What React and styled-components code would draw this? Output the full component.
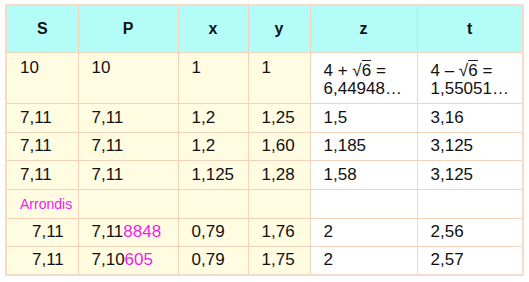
import React from "react";
import styled, { createGlobalStyle } from "styled-components";

const Global = createGlobalStyle`
  html, body { margin: 0; padding: 0; background: #ffffff; }
  body { font-family: "Liberation Sans", Arial, sans-serif; }
`;

const Page = styled.div`
  padding: 4px 0 0 5px;
`;

const Table = styled.table`
  border-collapse: collapse;
  table-layout: fixed;
  width: 519px;
  border: 2px solid #f6dcc8;
  font-family: "Liberation Sans", Arial, sans-serif;
  font-size: 17px;
  color: #111111;
`;

const HeadCell = styled.th`
  background: #b4fcf8;
  border: 1px solid #f2d2b8;
  height: 45px;
  padding: 0;
  font-size: 16px;
  font-weight: bold;
  text-align: center;
  vertical-align: middle;
  color: #111;
`;

const Cell = styled.td`
  background: ${(p) => (p.$white ? "#ffffff" : "#fffce2")};
  border: 1px solid #f2d2b8;
  padding: ${(p) => p.$pt || 0}px 4px 0 ${(p) => p.$pl || 13}px;
  vertical-align: ${(p) => (p.$top ? "top" : "middle")};
  line-height: 18px;
  white-space: nowrap;
`;

const Row = styled.tr`
  height: ${(p) => p.$h}px;
`;

const Pink = styled.span`
  color: #f020ef;
`;

const Note = styled.span`
  display: inline-block;
  color: #f020ef;
  font-size: 14px;
  margin-top: -2px;
`;

const Root = styled.span`
  white-space: nowrap;
`;

const Radicand = styled.span`
  border-top: 1px solid #222;
`;

const Sqrt = ({ n }) => (
  <Root>
    √<Radicand>{n}</Radicand>
  </Root>
);

const rows = [
  { h: 29, s: "7,11", p: "7,11", x: "1,2", y: "1,25", z: "1,5", t: "3,16" },
  { h: 28, s: "7,11", p: "7,11", x: "1,2", y: "1,60", z: "1,185", t: "3,125" },
  { h: 29, s: "7,11", p: "7,11", x: "1,125", y: "1,28", z: "1,58", t: "3,125" },
];

const rounded = [
  { h: 28, s: "7,11", p: ["7,11", "8848"], x: "0,79", y: "1,76", z: "2", t: "2,56" },
  { h: 29, s: "7,11", p: ["7,10", "605"], x: "0,79", y: "1,75", z: "2", t: "2,57" },
];

export default function App() {
  return (
    <Page>
      <Global />
      <Table>
        <colgroup>
          <col style={{ width: 72 }} />
          <col style={{ width: 100 }} />
          <col style={{ width: 70 }} />
          <col style={{ width: 62 }} />
          <col style={{ width: 107 }} />
          <col style={{ width: 106 }} />
        </colgroup>
        <thead>
          <Row $h={47}>
            <HeadCell>S</HeadCell>
            <HeadCell>P</HeadCell>
            <HeadCell>x</HeadCell>
            <HeadCell>y</HeadCell>
            <HeadCell>z</HeadCell>
            <HeadCell>t</HeadCell>
          </Row>
        </thead>
        <tbody>
          <Row $h={51}>
            <Cell $top $pt={6}>10</Cell>
            <Cell $top $pt={6}>10</Cell>
            <Cell $top $pt={6}>1</Cell>
            <Cell $top $pt={6}>1</Cell>
            <Cell $top $white $pt={9}>
              4 + <Sqrt n="6" /> =<br />6,44948…
            </Cell>
            <Cell $top $white $pt={9}>
              4 – <Sqrt n="6" /> =<br />1,55051…
            </Cell>
          </Row>
          {rows.map((r, i) => (
            <Row key={i} $h={r.h}>
              <Cell>{r.s}</Cell>
              <Cell>{r.p}</Cell>
              <Cell>{r.x}</Cell>
              <Cell>{r.y}</Cell>
              <Cell $white>{r.z}</Cell>
              <Cell $white>{r.t}</Cell>
            </Row>
          ))}
          <Row $h={29}>
            <Cell>
              <Note>Arrondis</Note>
            </Cell>
            <Cell />
            <Cell />
            <Cell />
            <Cell $white />
            <Cell $white />
          </Row>
          {rounded.map((r, i) => (
            <Row key={i} $h={r.h}>
              <Cell $pl={25}>{r.s}</Cell>
              <Cell>
                {r.p[0]}
                <Pink>{r.p[1]}</Pink>
              </Cell>
              <Cell>{r.x}</Cell>
              <Cell>{r.y}</Cell>
              <Cell $white>{r.z}</Cell>
              <Cell $white>{r.t}</Cell>
            </Row>
          ))}
        </tbody>
      </Table>
    </Page>
  );
}
